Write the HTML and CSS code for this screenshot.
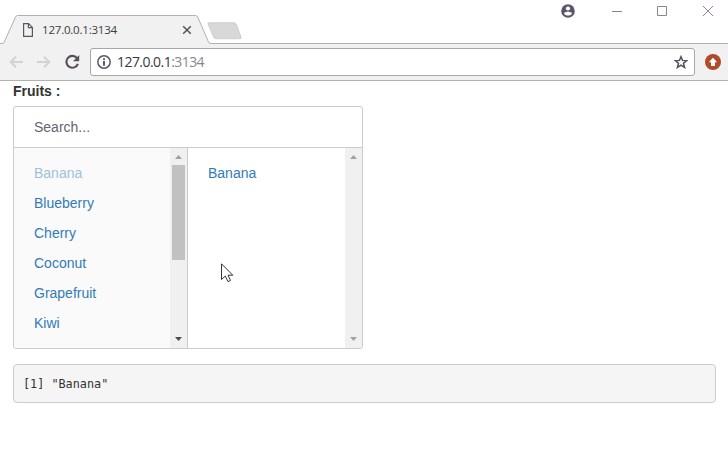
FILE: index.html
```
<!DOCTYPE html>
<html lang="en">
<head>
<meta charset="utf-8">
<title>127.0.0.1:3134</title>
<link rel="stylesheet" href="styles.css">
</head>
<body>
<header class="tabstrip">
  <div class="tab">
    <svg class="tab-shape" width="211" height="29" viewBox="0 0 211 29"><path d="M0 28.5H2Q3.5 28.5 4.2 27L15.5 2Q16.3.5 17.5.5H195.5Q197 .5 197.7 2L208.5 27Q209.2 28.5 211 28.5V29H0Z" fill="#f1f1f1"/><path d="M0 28.5H2Q3.5 28.5 4.2 27L15.5 2Q16.3.5 17.5.5H195.5Q197 .5 197.7 2L208.5 27Q209.2 28.5 211 28.5" fill="none" stroke="#b1b1b1"/></svg>
    <div class="tab-content">
      <svg width="12" height="14" viewBox="0 0 12 14" fill="none" stroke="#5a5560" stroke-width="1.2"><path d="M1.6.6H6.6L10.4 4.4V13.4H1.6ZM6.4.8V4.6H10.2"/></svg>
      <span class="tab-title">127.0.0.1:3134</span>
      <svg width="10" height="10" viewBox="0 0 10 10" stroke="#55505c" stroke-width="1.5"><path d="M1.2 1.2L8.8 8.8M8.8 1.2L1.2 8.8"/></svg>
    </div>
  </div>
  <svg class="new-tab" width="36" height="18" viewBox="0 0 36 18"><path d="M2 .8H27Q28.7.8 29.3 2.3L34 15Q34.5 16.7 33 16.7H9Q7.2 16.7 6.6 15L1 2Q.7.8 2 .8Z" fill="#d8d8d8" stroke="#cfcfcf"/></svg>
  <div class="window-controls">
    <svg width="14" height="14" viewBox="0 0 14 14"><circle cx="7" cy="7" r="6.8" fill="#5b5669"/><circle cx="7" cy="4.5" r="2.1" fill="#fff"/><path d="M2.9 9.5C3.6 7.3 10.4 7.3 11.1 9.5C9.3 12.2 4.7 12.2 2.9 9.5Z" fill="#fff"/></svg>
    <svg class="minimize" width="10" height="10" viewBox="0 0 10 10"><path d="M0 5.5H10" stroke="#8d8490"/></svg>
    <svg class="maximize" width="10" height="10" viewBox="0 0 10 10"><path d="M.5.5H9.5V9.5H.5Z" fill="none" stroke="#8d8490"/></svg>
    <svg class="close" width="10" height="10" viewBox="0 0 10 10"><path d="M0 0L10 10M10 0L0 10" stroke="#8d8490"/></svg>
  </div>
</header>
<nav class="toolbar">
  <svg class="back" width="14" height="12" viewBox="0 0 14 12" fill="none" stroke="#d2d2d2" stroke-width="1.9"><path d="M14 6H1.6M7 .7L1.6 6L7 11.3"/></svg>
  <svg class="forward" width="14" height="12" viewBox="0 0 14 12" fill="none" stroke="#d2d2d2" stroke-width="1.9"><path d="M0 6H12.4M7 .7L12.4 6L7 11.3"/></svg>
  <svg class="reload" width="15" height="15" viewBox="0 0 15 15"><path d="M12 4.2A5.9 5.9 0 1 0 12.9 9.8" fill="none" stroke="#55505c" stroke-width="2.1"/><path d="M14.2 1V7.2H8Z" fill="#55505c"/></svg>
  <div class="omnibox">
    <svg width="14" height="14" viewBox="0 0 14 14"><circle cx="7" cy="7" r="6.2" fill="none" stroke="#5b5665" stroke-width="1.5"/><path d="M6 3.2H8V5H6ZM6 6H8V10.8H6Z" fill="#5b5665"/></svg>
    <span class="url">127.0.0.1<span class="port">:3134</span></span>
    <svg class="star" width="14" height="14" viewBox="0 0 14 14"><path d="M7 1.7L8.5 5.4L12.7 5.7L9.5 8.3L10.6 12.5L7 10.2L3.4 12.5L4.5 8.3L1.3 5.7L5.5 5.4Z" fill="none" stroke="#55505e" stroke-width="1.5"/></svg>
  </div>
  <svg width="16" height="16" viewBox="0 0 16 16"><circle cx="8" cy="8" r="8" fill="#b04a28"/><path d="M8 3.8L12.2 8.3H10V12H6V8.3H3.8Z" fill="#fff"/></svg>
</nav>
<main class="page">
  <label class="label">Fruits :</label>
  <section class="picker">
    <div class="search">Search...</div>
    <div class="columns">
      <div class="column available">
        <ul class="items"><li class="selected">Banana</li><li>Blueberry</li><li>Cherry</li><li>Coconut</li><li>Grapefruit</li><li>Kiwi</li></ul>
        <div class="scrollbar">
          <svg width="17" height="17" viewBox="0 0 17 17"><path d="M5 11L8.5 7L12 11Z" fill="#a3a0a5"/></svg>
          <div class="thumb"></div>
          <svg class="down" width="17" height="17" viewBox="0 0 17 17"><path d="M5 6L8.5 10L12 6Z" fill="#4c4a50"/></svg>
        </div>
      </div>
      <div class="column chosen">
        <ul class="items"><li>Banana</li></ul>
        <div class="scrollbar">
          <svg width="17" height="17" viewBox="0 0 17 17"><path d="M5 11L8.5 7L12 11Z" fill="#a3a0a5"/></svg>
          <svg class="down" width="17" height="17" viewBox="0 0 17 17"><path d="M5 6L8.5 10L12 6Z" fill="#a3a0a5"/></svg>
        </div>
      </div>
    </div>
  </section>
  <pre class="output">[1] "Banana"</pre>
</main>
<svg class="cursor" width="13" height="20" viewBox="0 0 13 20"><path d="M.5.8V16.5L4.3 13.1L7 18.6L9.5 17.5L7 12.2H11.8Z" fill="#fff" stroke="#333"/></svg>
</body>
</html>
```
FILE: styles.css
```
* { box-sizing: border-box; }
body {
  margin: 0;
  width: 728px;
  height: 462px;
  overflow: hidden;
  background: #fff;
  color: #333;
  font-family: "Liberation Sans", Arial, sans-serif;
  font-size: 14px;
}
svg { display: block; flex: none; }
.tabstrip {
  display: flex;
  height: 44px;
  padding-top: 15px;
  background: linear-gradient(#b1b1b1, #b1b1b1) 0 43px / 100% 1px no-repeat;
}
.tab { display: grid; width: 211px; height: 29px; }
.tab-shape, .tab-content { grid-area: 1 / 1; }
.tab-content {
  display: flex;
  align-items: center;
  height: 29px;
  padding: 0 19px 0 22px;
}
.tab-title {
  flex: 1;
  margin-left: 8px;
  font: 11.6px/16px "Open Sans", sans-serif;
  letter-spacing: -0.25px;
  color: #423d45;
}
.new-tab { margin: 7px 0 0 -4px; }
.window-controls {
  display: flex;
  align-items: center;
  height: 14px;
  margin: -11px 15px 0 auto;
}
.minimize { margin-left: 37px; }
.maximize { margin-left: 35px; }
.close { margin-left: 36px; }
.toolbar {
  display: flex;
  align-items: center;
  height: 37px;
  padding: 0 7px 1px 9px;
  background: #f1f1f1;
  border-bottom: 1px solid #b1b1b1;
}
.forward { margin-left: 14px; }
.reload { margin-left: 14px; }
.omnibox {
  display: flex;
  align-items: center;
  width: 605px;
  height: 28px;
  margin: 0 10px;
  padding: 0 6px;
  background: #fff;
  border: 1px solid #a8a8a8;
  border-radius: 3px;
}
.url {
  margin-left: 6px;
  font: 14px/20px "Open Sans", sans-serif;
  letter-spacing: -0.55px;
  color: #3d383f;
}
.port { color: #898690; }
.star { margin-left: auto; }
.page { padding: 0 12px 0 13px; }
.label { display: block; height: 25px; font-weight: 700; line-height: 20px; }
.picker {
  width: 350px;
  height: 243px;
  border: 1px solid #ccc;
  border-radius: 3px;
  overflow: hidden;
}
.search {
  height: 41px;
  padding-left: 20px;
  border-bottom: 1px solid #ccc;
  line-height: 40px;
  color: #686370;
}
.columns { display: flex; height: 200px; }
.column { display: flex; justify-content: space-between; width: 174px; }
.available { background: #fafafa; border-right: 1px solid #ccc; }
.items {
  margin: 0;
  padding: 10px 0 0 20px;
  list-style: none;
  line-height: 30px;
  color: #337ab7;
}
.selected { color: #9ec1da; }
.scrollbar {
  display: flex;
  flex-direction: column;
  width: 17px;
  background: #f0f0f0;
}
.thumb { width: 13px; height: 95px; margin-left: 2px; background: #c1c1c1; }
.down { margin-top: auto; }
.output {
  height: 39px;
  margin: 15px 0 0;
  padding: 9px;
  background: #f5f5f5;
  border: 1px solid #ccc;
  border-radius: 4px;
  font: 11.8px/20px "DejaVu Sans Mono", monospace;
}
.cursor { position: absolute; left: 221px; top: 263px; }
```
